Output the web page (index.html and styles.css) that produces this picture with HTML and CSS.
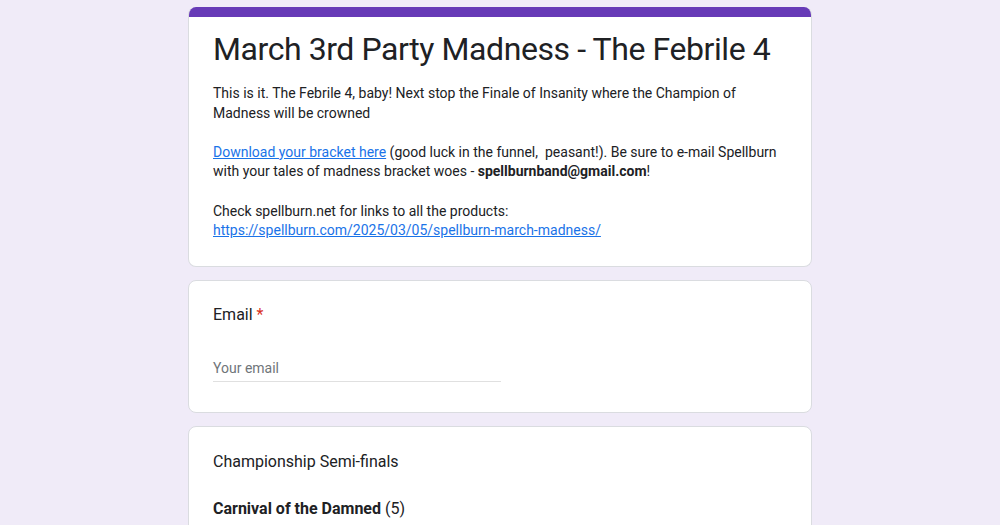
FILE: index.html
```html
<!DOCTYPE html>
<html>
<head>
<meta charset="utf-8">
<link rel="stylesheet" href="styles.css">
</head>
<body>
<div class="page">
  <div class="card header-card">
    <div class="topbar"></div>
    <div class="card-body head-body">
      <h1 class="title">March 3rd Party Madness - The Febrile 4</h1>
      <div class="desc">
        <p>This is it. The Febrile 4, baby! Next stop the Finale of Insanity where the Champion of Madness will be crowned</p>
        <p class="blank">&nbsp;</p>
        <p><a href="#">Download your bracket here</a> (good luck in the funnel,&nbsp; peasant!). Be sure to e-mail Spellburn with your tales of madness bracket woes - <b>spellburnband@gmail.com</b>!</p>
        <p class="blank">&nbsp;</p>
        <p>Check spellburn.net for links to all the products:<br><a href="#">https://spellburn.com/2025/03/05/spellburn-march-madness/</a></p>
      </div>
    </div>
  </div>

  <div class="card">
    <div class="card-body q-body">
      <div class="q-label">Email <span class="req">*</span></div>
      <div class="input">Your email</div>
    </div>
  </div>

  <div class="card">
    <div class="card-body q-body q3">
      <div class="q-label">Championship Semi-finals</div>
      <div class="option"><b>Carnival of the Damned</b> (5)</div>
    </div>
  </div>
</div>
</body>
</html>
```

FILE: styles.css
```css
* { box-sizing: border-box; }
html, body { margin: 0; padding: 0; }
body {
  background: #f0ebf8;
  font-family: Roboto, "Liberation Sans", Arial, sans-serif;
  color: #202124;
}
.page {
  width: 624px;
  margin: 0 auto;
  padding-top: 7px;
  display: flex;
  flex-direction: column;
  gap: 13px;
}
.card {
  background: #fff;
  border: 1px solid #dadce0;
  border-radius: 8px;
  overflow: hidden;
}
.header-card { border-top: none; }
.topbar {
  height: 10px;
  background: #673ab7;
}
.card-body { padding: 0 24px; }
.head-body { padding-top: 12px; padding-bottom: 25px; }
.title {
  margin: 0;
  font-family: Roboto, "Open Sans", sans-serif;
  font-weight: 400;
  font-size: 32px;
  line-height: 40px;
  color: #202124;
  letter-spacing: -0.42px;
}
.desc {
  margin-top: 15px;
  font-size: 14px;
  line-height: 19.6px;
  color: #202124;
}
.desc p { margin: 0; }
.desc a { color: #1a73e8; text-decoration: underline; }
.q-body { padding-top: 22px; padding-bottom: 30px; }
.q3 { padding-top: 23px; }
.q-label {
  font-size: 16px;
  line-height: 24px;
  color: #202124;
}
.req { color: #d93025; }
.input {
  margin-top: 31px;
  width: 288px;
  font-size: 14px;
  line-height: 20px;
  color: #70757a;
  padding-bottom: 3px;
  border-bottom: 1px solid #e0e0e0;
}
.option {
  margin-top: 23px;
  font-size: 16px;
  line-height: 24px;
  color: #202124;
}
```
